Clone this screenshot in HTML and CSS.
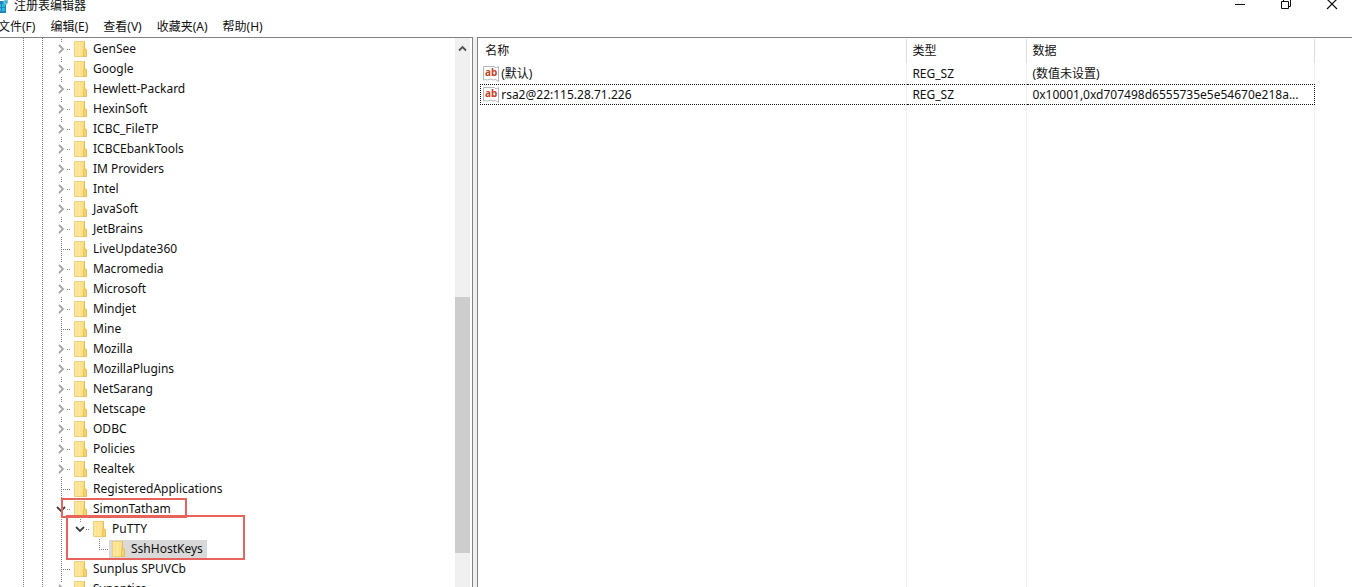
FILE: index.html
```
<!DOCTYPE html>
<html lang="zh-CN">
<head>
<meta charset="utf-8">
<title>注册表编辑器</title>
<link rel="stylesheet" href="styles.css">
</head>
<body>
<header class="titlebar">
  <svg class="app-icon" width="9" height="15" viewBox="0 0 9 15" aria-hidden="true"><path d="M0 1h6v12H0z" fill="#1c86b4"/><path d="M2 4h3v3H2zM2 8h3v3H2zM0 4h1v3H0zM0 8h1v3H0z" fill="#35b4dc"/><path d="M4 0h4v3L6 5 3 3z" fill="#6cc9e6"/><path d="M6 1v2" stroke="#2a7ea2"/></svg>
  <h1 class="title">注册表编辑器</h1>
  <div class="controls">
    <button class="control" aria-label="最小化"><svg width="12" height="12" viewBox="0 0 12 12"><path d="M1 6.500h10" stroke="#111"/></svg></button>
    <button class="control" aria-label="还原"><svg width="12" height="12" viewBox="0 0 12 12"><path d="M1.500 3.500h7v7h-7zM3.500 3.500v-2h7v7h-2" fill="none" stroke="#111"/></svg></button>
    <button class="control" aria-label="关闭"><svg width="12" height="12" viewBox="0 0 12 12"><path d="M1 1l10 10M11 1L1 11" stroke="#111" stroke-width="1.200"/></svg></button>
  </div>
</header>
<nav class="menubar">
  <button class="menu">文件(F)</button>
  <button class="menu">编辑(E)</button>
  <button class="menu">查看(V)</button>
  <button class="menu">收藏夹(A)</button>
  <button class="menu">帮助(H)</button>
</nav>
<main class="panes">
  <section class="tree-pane">
    <ul class="tree" id="tree"></ul>
    <div class="scrollbar">
      <button class="scroll-up" aria-label="向上滚动"><svg width="9" height="7" viewBox="0 0 9 7"><path d="M1 5.500L4.500 2 8 5.500" fill="none" stroke="#505050" stroke-width="1.800"/></svg></button>
      <div class="space-above"></div>
      <div class="thumb"></div>
      <div class="space-below"></div>
    </div>
  </section>
  <section class="list-pane">
    <table class="values">
      <colgroup><col class="col-name"><col class="col-type"><col class="col-data"><col></colgroup>
      <thead><tr><th>名称</th><th>类型</th><th>数据</th><th class="rest"></th></tr></thead>
      <tbody>
        <tr><td><span class="value"><svg class="ab" width="16" height="16" viewBox="0 0 16 16"><use href="#ab"/></svg>(默认)</span></td><td>REG_SZ</td><td>(数值未设置)</td><td class="rest"></td></tr>
        <tr class="focused"><td><span class="value"><svg class="ab" width="16" height="16" viewBox="0 0 16 16"><use href="#ab"/></svg>rsa2@22:115.28.71.226</span></td><td>REG_SZ</td><td>0x10001,0xd707498d6555735e5e54670e218a...</td><td class="rest"></td></tr>
        <tr class="filler"><td></td><td></td><td></td><td class="rest"></td></tr>
      </tbody>
    </table>
  </section>
</main>
<svg class="defs" width="0" height="0" aria-hidden="true">
  <defs>
    <symbol id="ab" viewBox="0 0 16 16"><path d="M.5.5h11l1.500 1.500 2.500-1.500v15l-3-2-2 .5-3-1-3 1-2-.5-2 .5z" fill="#fff" stroke="#b4b8ba"/><text x="2" y="10" class="ab-text">ab</text></symbol>
    <symbol id="folder" viewBox="0 0 13 16"><path d="M.5.5h10v15H.5z" fill="#ffe28b" stroke="#ecd07c"/><path d="M10.500.5v7l2 1v7H9.500z" fill="#f8d568" stroke="#e3bf5a"/><path d="M2 1v14M5.500 1v14" stroke="#ffebae"/></symbol>
    <symbol id="closed" viewBox="0 0 10 10"><path d="M3 1l4 4-4 4" fill="none" stroke="#a6a6a6" stroke-width="1.800"/></symbol>
    <symbol id="open" viewBox="0 0 10 10"><path d="M1 3l4 4 4-4" fill="none" stroke="#404040" stroke-width="1.800"/></symbol>
  </defs>
</svg>
<script src="tree.js"></script>
</body>
</html>
```
FILE: tree.js
```
const keys = [
  ["GenSee", "closed"], ["Google", "closed"], ["Hewlett-Packard", "closed"],
  ["HexinSoft", "closed"], ["ICBC_FileTP", "closed"], ["ICBCEbankTools", "closed"],
  ["IM Providers", "closed"], ["Intel", "closed"], ["JavaSoft", "closed"],
  ["JetBrains", "closed"], ["LiveUpdate360", ""], ["Macromedia", "closed"],
  ["Microsoft", "closed"], ["Mindjet", "closed"], ["Mine", ""],
  ["Mozilla", "closed"], ["MozillaPlugins", "closed"], ["NetSarang", "closed"],
  ["Netscape", "closed"], ["ODBC", "closed"], ["Policies", "closed"],
  ["Realtek", "closed"], ["RegisteredApplications", ""],
  ["SimonTatham", "open", [["PuTTY", "open", [["SshHostKeys", "selected"]]]]],
  ["Sunplus SPUVCb", ""], ["Synaptics", "closed"]
];

function icon(id, width, height, name) {
  return `<svg class="${name}" width="${width}" height="${height}"><use href="#${id}"/></svg>`;
}

function item([label, state, children]) {
  const twisty = state === "closed" || state === "open"
    ? `<button class="twisty" aria-label="${label}">${icon(state, 10, 10, "arrow")}</button>`
    : "";
  const mark = label === "SimonTatham" ? '<span class="mark mark-key"></span>' : "";
  const markSub = label === "PuTTY" ? '<span class="mark mark-sub"></span>' : "";
  const nested = children ? `<ul class="branch">${children.map(item).join("")}</ul>` : "";
  return `<li class="node"><div class="row"><span class="joint">${twisty}</span>` +
    `<span class="key ${state === "selected" ? "selected" : ""}">${icon("folder", 13, 16, "folder")}` +
    `<span class="label">${label}</span></span>${mark}${markSub}</div>${nested}</li>`;
}

document.getElementById("tree").innerHTML = keys.map(item).join("");
```
FILE: styles.css
```
* { box-sizing: border-box; }
body {
  margin: 0;
  height: 100vh;
  display: flex;
  flex-direction: column;
  overflow: hidden;
  background: #fff;
  color: #111;
  font: 12px/16px "Noto Sans", "Noto Sans CJK SC", sans-serif;
}
button {
  border: 0;
  padding: 0;
  background: none;
  color: inherit;
  font: inherit;
}
svg { display: block; flex: none; }
.defs { position: absolute; }

.titlebar { display: flex; height: 17px; flex: none; }
.title { margin: -3px 0 0 5px; font-size: 12px; font-weight: 400; line-height: 17px; }
.controls { display: flex; gap: 34px; margin-left: auto; padding-right: 14px; }
.control { width: 12px; height: 10px; margin-top: -2px; }
.menubar { display: flex; gap: 15px; height: 20px; flex: none; margin-left: -2px; }
.menu { height: 20px; white-space: nowrap; }

.panes { display: flex; flex: 1; min-height: 0; background: #f0f0f0; gap: 4px; }
.tree-pane {
  display: flex;
  width: 35%;
  background: #fff;
  border-top: 1px solid #828282;
  border-right: 1px solid #828282;
  padding-right: 2px;
  overflow: hidden;
}
.tree {
  flex: 1;
  min-width: 0;
  margin: 0;
  padding: 1px 0 0 61px;
  list-style: none;
  background:
    repeating-linear-gradient(#808080 0 1px, #fff 1px 2px) 23px 0 / 1px 100% no-repeat,
    repeating-linear-gradient(#808080 0 1px, #fff 1px 2px) 42px 0 / 1px 100% no-repeat;
}
.node { background: repeating-linear-gradient(#808080 0 1px, #fff 1px 2px) 0 0 / 1px 100% no-repeat; }
.branch { margin: 0; padding: 0 0 0 19px; list-style: none; }
.branch .node { background-size: 1px 10px; }
.row { position: relative; display: flex; align-items: center; height: 20px; }
.joint {
  display: flex;
  align-items: center;
  width: 10px;
  height: 20px;
  background: repeating-linear-gradient(90deg, #808080 0 1px, #fff 1px 2px) 0 10px / 100% 1px no-repeat;
}
.twisty { width: 12px; height: 14px; margin-left: -6px; padding: 2px 0 2px 1px; background: #fff; }
.key { display: flex; align-items: center; height: 18px; padding: 0 4px 0 3px; }
.label { margin-left: 6px; white-space: pre; }
.selected { background: #d9d9d9; }
.mark { position: absolute; border: 2px solid #e8635c; pointer-events: none; }
.mark-key { left: 0; top: -1px; width: 126px; height: 20px; }
.mark-sub { left: -14px; top: -4px; width: 179px; height: 45px; }

.scrollbar { display: flex; flex-direction: column; width: 15px; flex: none; background: #f0f0f0; }
.scroll-up { display: flex; align-items: center; justify-content: center; height: 20px; flex: none; }
.space-above { flex: 239; }
.thumb { flex: 256; background: #cdcdcd; }
.space-below { flex: 34; }

.list-pane {
  flex: 1;
  min-width: 0;
  background: #fff;
  border-top: 1px solid #828282;
  border-left: 1px solid #828282;
  padding: 1px 0 0 2px;
}
.values { width: 100%; height: 100%; table-layout: fixed; border-collapse: separate; border-spacing: 0; }
.col-name { width: 49%; }
.col-type { width: 120px; }
.col-data { width: 33%; }
th, td { padding: 0 0 0 5px; border-right: 1px solid #f0f0f0; text-align: left; font-weight: 400; white-space: nowrap; }
th { height: 24px; border-right-color: #dedede; }
td { height: 21px; }
td:first-child { padding-left: 3px; }
th.rest, td.rest { border-right: 0; }
.value { display: flex; align-items: center; gap: 2px; }
.focused td:not(.rest) { height: 19px; border-top: 1px dotted #111; border-bottom: 1px dotted #111; }
.focused td:first-child { border-left: 1px dotted #111; padding-left: 2px; }
.focused td:nth-child(3) { border-right: 1px dotted #111; }
.filler td { height: auto; }
.ab-text { fill: #c8432b; font: 700 10px "Noto Sans", sans-serif; }
```
